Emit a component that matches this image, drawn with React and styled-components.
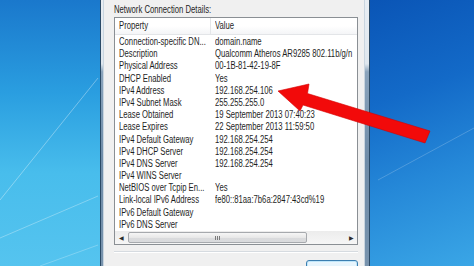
import React from 'react'
import styled, {createGlobalStyle} from 'styled-components'

const GlobalStyle = createGlobalStyle`
  html, body {
    margin: 0;
    padding: 0;
    width: 474px;
    height: 266px;
    overflow: hidden;
  }
  body {
    font-family: "Liberation Sans", Arial, sans-serif;
  }
`;

const Screen = styled.div`
  position: relative;
  display: flex;
  width: 474px;
  height: 266px;
  overflow: hidden;
`;

const Wall = styled.div`
  position: relative;
  flex: ${p => p.$grow ? '1' : `0 0 ${p.$width}px`};
  background: ${p => p.$bg};
  overflow: hidden;

  svg {
    position: absolute;
    inset: 0;
  }
`;

const Window = styled.div`
  flex: 0 0 270px;
  display: flex;
`;

const Frame = styled.div`
  flex: 0 0 ${p => p.$width}px;
  background: linear-gradient(180deg, #e9eef3 0%, #dfe7ee 24%, #8aa3bb 27%, #6f8ca8 60%, #7893ad 100%);
  box-shadow: ${p => p.$side === 'left'
    ? 'inset 1px 0 0 #2b4a66, inset -1px 0 0 #c9d5df'
    : 'inset -1px 0 0 #2b4a66, inset 1px 0 0 #c9d5df'};
`;

const Body = styled.div`
  flex: 1;
  display: flex;
  flex-direction: column;
  background: #f0f0f0;
  padding: 4px 6px 0 10px;
  font-size: 10px;
  color: #1e1e1e;
`;

/* the capture is squeezed horizontally, so the Segoe-like text is narrowed */
const Text = styled.span`
  display: inline-block;
  white-space: nowrap;
  transform: scaleX(0.77);
  transform-origin: left center;
`;

const Label = styled.div`
  height: 12px;
  line-height: 12px;
  margin-bottom: 1px;
`;

const ListView = styled.div`
  height: 230px;
  box-sizing: border-box;
  border: 1px solid #8a8f94;
  background: #fff;
  display: flex;
  flex-direction: column;
`;

const Grid = styled.div`
  display: grid;
  grid-template-columns: 96px 1fr;
  align-items: center;
`;

const Header = styled(Grid)`
  height: 17px;
  box-sizing: border-box;
  background: linear-gradient(180deg, #ffffff 0%, #ffffff 50%, #f4f5f7 100%);
  border-bottom: 1px solid #e3e5e8;
`;

const HeadCell = styled.div`
  height: 100%;
  line-height: 16px;
  padding-left: 4px;
  border-right: ${p => p.$sep ? '1px solid #e4e6e9' : 'none'};
  box-sizing: border-box;
`;

const Rows = styled.div`
  padding-top: 1px;
  flex: 1;
`;

const Row = styled(Grid)`
  height: 12.2px;
  line-height: 12.2px;
`;

const Cell = styled.div`
  padding-left: 4px;
  white-space: nowrap;
  overflow: hidden;
`;

const HScroll = styled.div`
  height: 13px;
  display: flex;
  align-items: stretch;
  background: linear-gradient(180deg, #ececec, #f6f6f6);
`;

const ArrowBtn = styled.div`
  flex: 0 0 12px;
  display: flex;
  align-items: center;
  justify-content: center;
  font-size: 6px;
  color: #2c2c2c;
`;

const Track = styled.div`
  flex: 1;
  display: flex;
  padding: 1px 0;
`;

const Thumb = styled.div`
  flex: 0 0 177px;
  margin-left: 1px;
  border: 1px solid #a6a9ad;
  border-radius: 2px;
  background: linear-gradient(180deg, #f6f6f6 0%, #e8e8e8 50%, #d9dadc 51%, #dadbdd 100%);
  display: flex;
  align-items: center;
  justify-content: center;
`;

const Grip = styled.div`
  width: 6px;
  height: 4px;
  background: repeating-linear-gradient(90deg, #7b7b7b 0 1px, transparent 1px 2px);
`;

const Separator = styled.div`
  margin-top: 6px;
  height: 1px;
  border-top: 1px solid #d6dbe0;
  border-bottom: 1px solid #ffffff;
`;

const Buttons = styled.div`
  display: flex;
  justify-content: flex-end;
  margin-top: 7px;
`;

const Button = styled.div`
  width: 52px;
  height: 22px;
  box-sizing: border-box;
  border: 1px solid #3c7fb1;
  border-radius: 3px;
  background: linear-gradient(180deg, #eaf6fd, #d9f0fc);
  box-shadow: inset 0 0 0 1px #bfe6fa;
`;

const Arrow = styled.svg`
  position: absolute;
  left: 0;
  top: 0;
  pointer-events: none;
`;

const details = [
  ['Connection-specific DN...', 'domain.name'],
  ['Description', 'Qualcomm Atheros AR9285 802.11b/g/n'],
  ['Physical Address', '00-1B-81-42-19-8F'],
  ['DHCP Enabled', 'Yes'],
  ['IPv4 Address', '192.168.254.106'],
  ['IPv4 Subnet Mask', '255.255.255.0'],
  ['Lease Obtained', '19 September 2013 07:40:23'],
  ['Lease Expires', '22 September 2013 11:59:50'],
  ['IPv4 Default Gateway', '192.168.254.254'],
  ['IPv4 DHCP Server', '192.168.254.254'],
  ['IPv4 DNS Server', '192.168.254.254'],
  ['IPv4 WINS Server', ''],
  ['NetBIOS over Tcpip En...', 'Yes'],
  ['Link-local IPv6 Address', 'fe80::81aa:7b6a:2847:43cd%19'],
  ['IPv6 Default Gateway', ''],
  ['IPv6 DNS Server', ''],
];

function Streaks({lines}) {
  return (
    <svg width="100%" height="100%">
      {lines.map((l, i) => (
        <line key={i} x1={l[0]} y1={l[1]} x2={l[2]} y2={l[3]}
              stroke="#ffffff" strokeOpacity={l[4]} strokeWidth="1"/>
      ))}
    </svg>
  )
}

export default function App() {
  return (
    <Screen>
      <GlobalStyle/>
      <Wall $width={100} $bg="linear-gradient(180deg, #1a78cc 0%, #2a9ee0 35%, #48bdec 65%, #55c4ef 100%)">
        <Streaks lines={[
          [0, 200, 98, 78, 0.35],
          [0, 238, 98, 196, 0.3],
          [40, 266, 98, 245, 0.25],
        ]}/>
      </Wall>

      <Window>
        <Frame $width={4} $side="left"/>
        <Body>
          <Label><Text>Network Connection Details:</Text></Label>
          <ListView>
            <Header>
              <HeadCell $sep><Text>Property</Text></HeadCell>
              <HeadCell><Text>Value</Text></HeadCell>
            </Header>
            <Rows>
              {details.map(([k, v]) => (
                <Row key={k}>
                  <Cell><Text>{k}</Text></Cell>
                  <Cell><Text>{v}</Text></Cell>
                </Row>
              ))}
            </Rows>
            <HScroll>
              <ArrowBtn>◀</ArrowBtn>
              <Track>
                <Thumb><Grip/></Thumb>
              </Track>
              <ArrowBtn>▶</ArrowBtn>
            </HScroll>
          </ListView>
          <Separator/>
          <Buttons>
            <Button/>
          </Buttons>
        </Body>
        <Frame $width={6} $side="right"/>
      </Window>

      <Wall $grow $bg="linear-gradient(160deg, #0a55b6 0%, #136ac8 35%, #2588d8 65%, #3aa6e6 100%)">
        <Streaks lines={[
          [8, 180, 104, 128, 0.2],
        ]}/>
      </Wall>

      <Arrow width="474" height="266" viewBox="0 0 474 266">
        <polygon
          points="278,91 309,84 307.5,93.5 430,131 425,143 303,105 300,111"
          fill="#f20a0a"
          stroke="#d40000"
          strokeWidth="0.6"
          strokeLinejoin="round"
        />
      </Arrow>
    </Screen>
  )
}
